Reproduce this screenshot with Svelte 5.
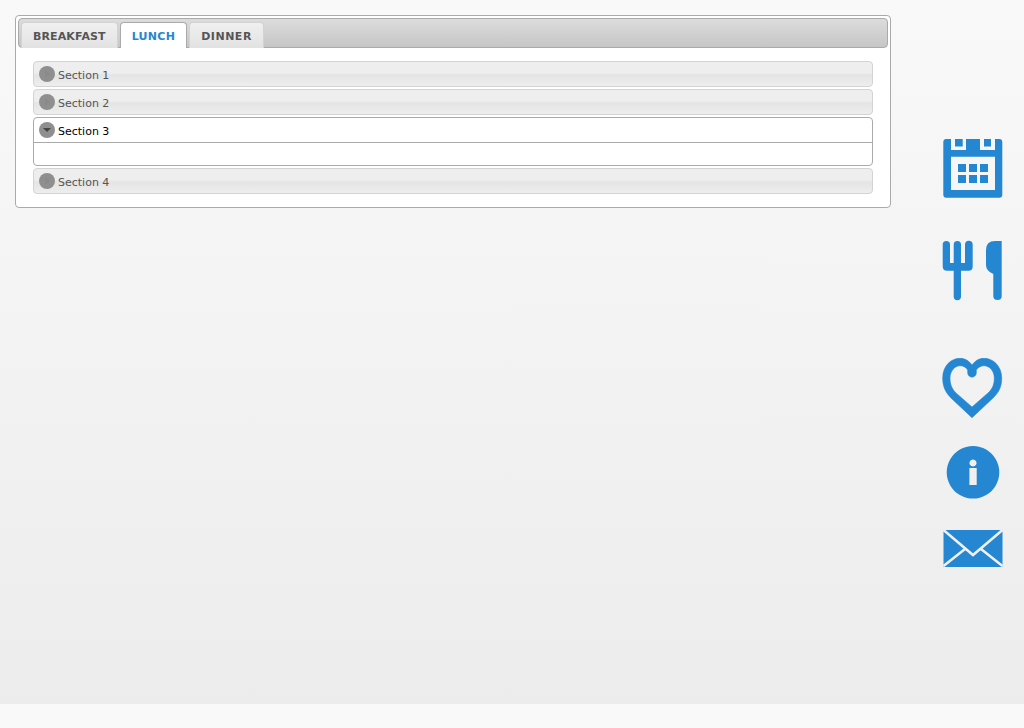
<script>
  const tabs = [
    { label: 'Breakfast', active: false, wide: false },
    { label: 'Lunch', active: true, wide: false },
    { label: 'Dinner', active: false, wide: true }
  ];
  const sections = [
    { label: 'Section 1', open: false },
    { label: 'Section 2', open: false },
    { label: 'Section 3', open: true },
    { label: 'Section 4', open: false }
  ];
</script>

<div class="page">
  <main class="main">
    <div class="tabs">
      <ul class="tabbar">
        {#each tabs as t}
          <li class="tab" class:active={t.active} class:wide={t.wide}>{t.label}</li>
        {/each}
      </ul>
      <div class="tabpanel">
        {#each sections as s}
          <section class="section" class:open={s.open}>
            <h3 class="head">
              <span class="toggle">
                <span class={s.open ? 'arrow' : 'arrow-closed'}></span>
              </span>
              <span class="label">{s.label}</span>
            </h3>
            {#if s.open}<div class="body"></div>{/if}
          </section>
        {/each}
      </div>
    </div>
  </main>
  <aside class="side">
    <svg class="ic cal" viewBox="942 138 62 60" aria-label="Calendar">
      <path fill-rule="evenodd" d="M951 139H946.300Q943.300 139 943.300 142V194.700Q943.300 197.700 946.300 197.700H999.300Q1002.300 197.700 1002.300 194.700V142Q1002.300 139 999.300 139H995V150H980V139H966V150H951ZM955 139H962.700V146.500H955ZM984 139H991V146.500H984ZM951 156.700H995V190H951ZM958 164V172H966V164ZM969 164V172H977V164ZM980 164V172H988V164ZM958 175V183H966V175ZM969 175V183H977V175ZM980 175V183H988V175Z"/>
    </svg>
    <svg class="ic fork" viewBox="942 240 62 61" aria-label="Meals">
      <path d="M942.700 244.600a3.600 3.600 0 0 1 7.300 0V263H953.700V244.600a3.650 3.650 0 0 1 7.300 0V263H965V244.600a3.850 3.850 0 0 1 7.700 0V266.500q0 4.200 -4.200 4.200H961V296.500a3.650 3.650 0 0 1 -7.300 0V270.700H947q-4.300 0 -4.300 -4.200Z"/>
      <path d="M1001.700 241V296q0 4 -4.200 4t-4.200 -4V274q-7.300 -3 -7.300 -9V250q0 -9 9 -9Z"/>
    </svg>
    <svg class="ic heart" viewBox="942 358 62 60" aria-label="Favourites">
      <path fill-rule="evenodd" d="M972 417.700L951 398C944.500 391.500 942.700 385 942.700 378C942.700 366 951 358.300 960 358.300C965 358.300 969 361 972 365C975 361 979 358.300 984 358.300C993 358.300 1001.700 366 1001.700 378C1001.700 385 1000 391.500 993 398ZM972 407L956 393C951.500 388.500 950 383.500 950 378C950 371 955 365.700 960 365.700C963.500 365.700 966 367.300 967.700 370V373C968 378.500 976 378.500 976.300 373V370C978 367.300 981 365.700 984 365.700C989.500 365.700 994.300 371 994.300 378C994.300 383.500 993 388.500 988 393Z"/>
    </svg>
    <svg class="ic info" viewBox="942 446 62 53" aria-label="Information">
      <path fill-rule="evenodd" d="M973 446a26.300 26.300 0 1 0 0.010 0ZM973 459.500a3.500 3.500 0 1 1 -0.010 0ZM969.400 468H976.700V485H969.400Z"/>
    </svg>
    <svg class="ic mail" viewBox="942 528 62 40" aria-label="Mail">
      <rect x="943.500" y="530" width="59" height="37" rx="1"/>
      <path class="flap" d="M943.500 530L973 555L1002.500 530M943.500 566L965 549M1002.500 566L981 549"/>
    </svg>
  </aside>
</div>

<style>
  :global(body) {
    margin: 0;
    background: #f9f9f9;
  }
  .page {
    display: flex;
    align-items: flex-start;
    height: 704px;
    overflow: hidden;
    background: linear-gradient(#f9f9f9, #ececec);
    font-family: "DejaVu Sans", Verdana, sans-serif;
    font-size: 11px;
  }
  .main {
    box-sizing: border-box;
    width: 891px;
    padding: 15px 0 0 15px;
  }
  .tabs {
    box-sizing: border-box;
    height: 193px;
    padding: 2px;
    background: #fff;
    border: 1px solid #aaa;
    border-radius: 4px;
  }
  .tabbar {
    box-sizing: border-box;
    display: flex;
    gap: 2px;
    height: 30px;
    margin: 0;
    padding: 3px 0 0 2px;
    list-style: none;
    background: linear-gradient(#dcdcdc, #c6c6c6);
    border: 1px solid #aaa;
    border-radius: 4px;
  }
  .tab {
    box-sizing: border-box;
    height: 26px;
    padding: 0 11px;
    line-height: 27px;
    font-weight: bold;
    font-size: 11px;
    letter-spacing: 0.12px;
    text-transform: uppercase;
    color: #555;
    background: linear-gradient(#f0f0f0, #e2e2e2);
    border: 1px solid #d3d3d3;
    border-bottom: 0;
    border-radius: 4px 4px 0 0;
  }
  .tab.wide {
    letter-spacing: 0.5px;
  }
  .tab.active {
    letter-spacing: 0.3px;
    color: #2587d1;
    background: #fff;
    border-color: #aaa;
  }
  .tabpanel {
    display: flex;
    flex-direction: column;
    gap: 2px;
    padding: 13px 15px 0;
  }
  .section {
    border: 1px solid #d3d3d3;
    border-radius: 4px;
    background: linear-gradient(#eee 0 46%, #e4e4e4 54%, #eee);
    color: #555;
  }
  .section.open {
    background: #fff;
    border-color: #aaa;
    color: #000;
  }
  .head {
    display: flex;
    align-items: center;
    gap: 3px;
    height: 24px;
    margin: 0;
    padding: 0 5px;
    font-size: 11px;
    font-weight: normal;
  }
  .label {
    margin-top: 2px;
  }
  .toggle {
    display: flex;
    align-items: center;
    justify-content: center;
    width: 16px;
    height: 16px;
    border-radius: 50%;
    background: #8f8f8f;
  }
  .arrow {
    margin-top: -1px;
    border-style: solid;
    border-width: 4.500px 4px 0;
    border-color: #444 transparent transparent;
  }
  .arrow-closed {
    border-style: solid;
    border-width: 4px 0 4px 5px;
    border-color: transparent transparent transparent #8a8a8a;
  }
  .body {
    height: 22px;
    border-top: 1px solid #aaa;
  }
  .side {
    display: flex;
    flex-direction: column;
    align-items: flex-start;
    padding-left: 51px;
  }
  .ic {
    display: block;
    flex: none;
    width: 62px;
    fill: #2587d1;
  }
  .heart {
    stroke: #2587d1;
    stroke-width: 0.600;
  }
  .cal { height: 60px; margin-top: 138px; }
  .fork { height: 61px; margin-top: 42px; }
  .heart { height: 60px; margin-top: 57px; }
  .info { height: 53px; margin-top: 28px; }
  .mail { height: 40px; margin-top: 29px; }
  .flap {
    fill: none;
    stroke: #f0f0f0;
    stroke-width: 2.500;
  }
</style>
